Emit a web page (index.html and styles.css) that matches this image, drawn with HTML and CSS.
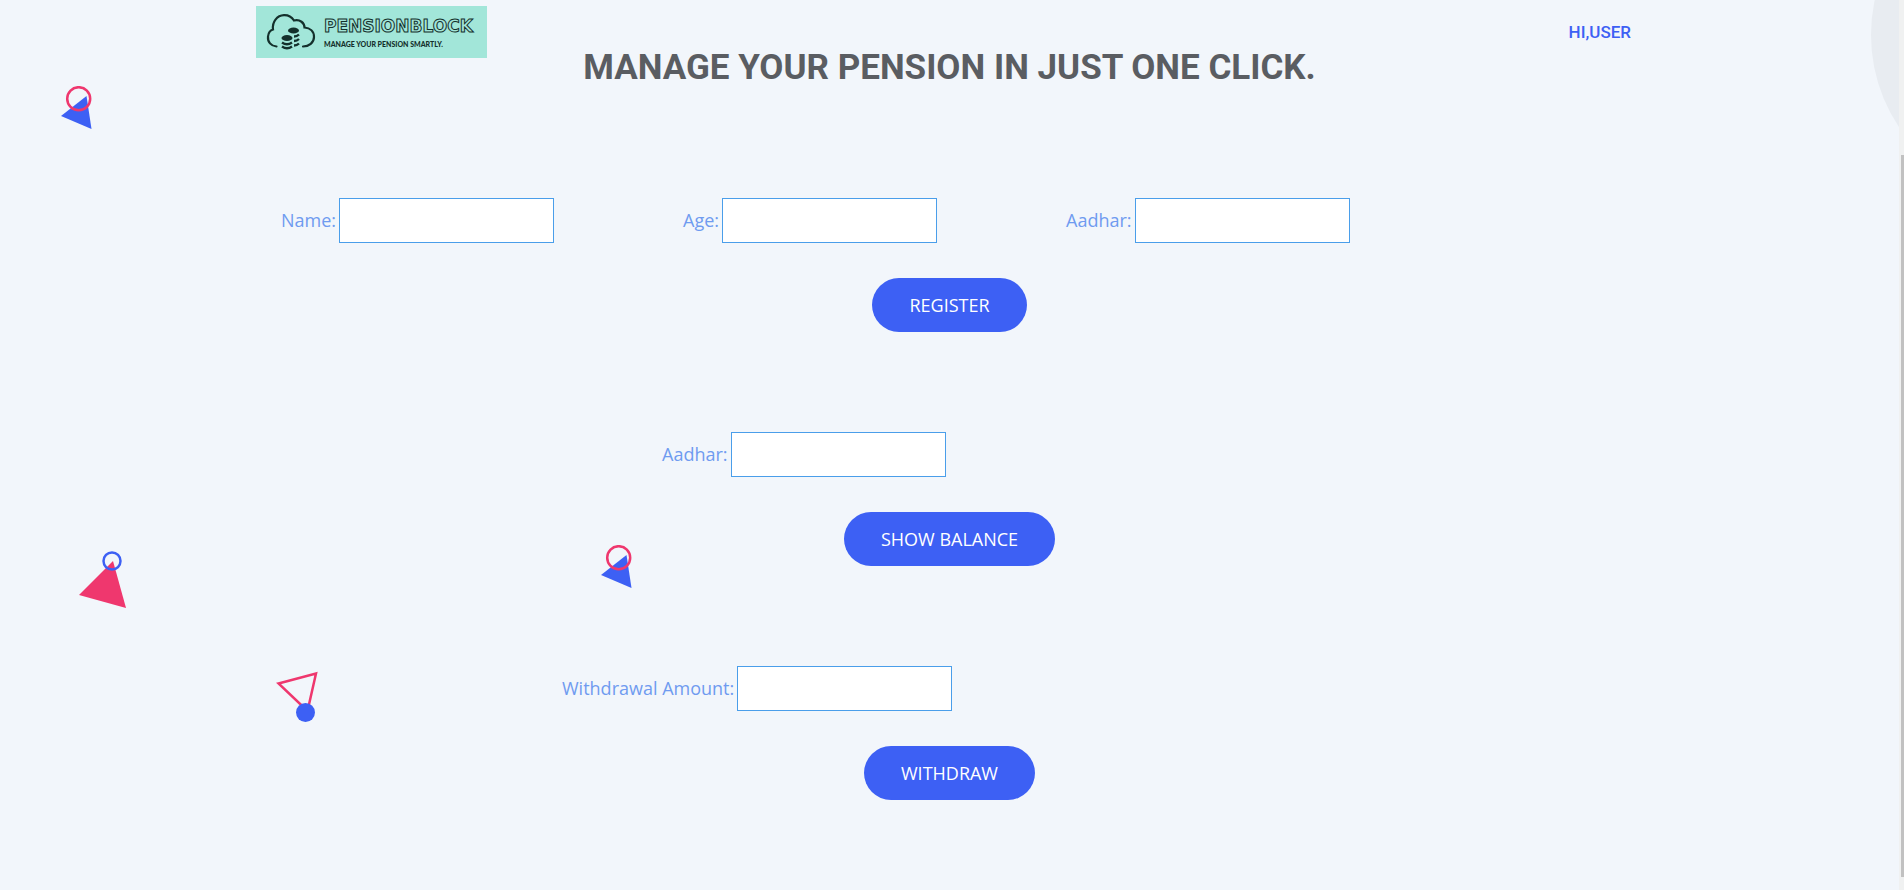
FILE: index.html
```html
<!DOCTYPE html>
<html lang="en">
<head>
<meta charset="utf-8">
<meta name="viewport" content="width=device-width, initial-scale=1">
<title>PensionBlock</title>
<link rel="stylesheet" href="styles.css">
</head>
<body>
<div class="page">
  <div class="decor" aria-hidden="true">
    <span class="disc"></span>
    <svg class="shape shape-top" width="34" height="44" viewBox="0 0 34 44">
      <path class="fill-blue" d="M1 30 26.500 10 31.500 43Z"/>
      <circle class="line-pink" cx="18.700" cy="12.700" r="11.500"/>
    </svg>
    <svg class="shape shape-left" width="50" height="60" viewBox="0 0 50 60">
      <path class="fill-pink" d="M1 45 35 11 48 58Z"/>
      <circle class="line-blue" cx="34" cy="11" r="8.500"/>
    </svg>
    <svg class="shape shape-bottom" width="44" height="52" viewBox="0 0 44 52">
      <path class="line-pink" d="M2.500 12.500 40 2.500 31.500 40Z"/>
      <circle class="fill-blue" cx="29.500" cy="41.500" r="9.500"/>
    </svg>
    <svg class="shape shape-center" width="34" height="44" viewBox="0 0 34 44">
      <path class="fill-blue" d="M1 30 26.500 10 31.500 43Z"/>
      <circle class="line-pink" cx="18.700" cy="12.700" r="11.500"/>
    </svg>
  </div>
  <div class="container">
    <header class="header">
      <a class="logo" href="#">
        <svg class="logo-icon" width="50" height="38" viewBox="0 0 50 38" aria-hidden="true">
          <path class="cloud" d="M10.500 33.500C5 33 1.500 29 2 23.500C2.500 19 5 17 7 16.500C6 9 11 2.500 18 2.200C23 2 26 4.500 28 7.500C34 6 38.500 10 38.500 14.500C44 15 48 18.500 48 24C48 29.500 43 33.500 37 33.500"/>
          <ellipse cx="27.500" cy="17.500" rx="5.500" ry="3"/>
          <ellipse cx="21" cy="25" rx="5.500" ry="3"/>
          <path class="coin" d="M16 29.500Q21 33 26 29.500M16 33.500Q21 37 26 33.500M28 23.500Q31 23.500 33 21.500M28 28Q31 28 33 26M28 32.500Q31 32.500 33 30.500"/>
        </svg>
        <span class="logo-text">
          <span class="logo-name">PENSIONBLOCK</span>
          <span class="logo-tagline">MANAGE YOUR PENSION SMARTLY.</span>
        </span>
      </a>
      <a class="user" href="#">HI,USER</a>
    </header>
    <main>
      <h1 class="title">MANAGE YOUR PENSION IN JUST ONE CLICK.</h1>
      <form class="form">
        <div class="fields fields-register">
          <div class="field"><label for="name">Name:</label><input id="name" type="text"></div>
          <div class="field"><label for="age">Age:</label><input id="age" type="text"></div>
          <div class="field"><label for="aadhar">Aadhar:</label><input id="aadhar" type="text"></div>
        </div>
        <button class="button" type="button">REGISTER</button>
      </form>
      <form class="form">
        <div class="fields fields-balance">
          <div class="field"><label for="balance-aadhar">Aadhar:</label><input id="balance-aadhar" type="text"></div>
        </div>
        <button class="button" type="button">SHOW BALANCE</button>
      </form>
      <form class="form">
        <div class="fields fields-withdraw">
          <div class="field"><label for="amount">Withdrawal Amount:</label><input id="amount" type="text"></div>
        </div>
        <button class="button" type="button">WITHDRAW</button>
      </form>
    </main>
  </div>
</div>
<div class="scrollbar" aria-hidden="true"><span class="thumb"></span></div>
</body>
</html>
```

FILE: styles.css
```css
* { box-sizing: border-box; }

body {
  display: flex;
  min-height: 100vh;
  margin: 0;
  background: #f2f6fb;
  font-family: "Open Sans", "Noto Sans", sans-serif;
  font-size: 18px;
  line-height: 28px;
}

.page {
  position: relative;
  flex: 1;
  overflow: hidden;
}

.container {
  position: relative;
  max-width: 1387px;
  margin: 0 auto;
}

/* Decorative shapes */
.disc {
  position: absolute;
  top: -130px;
  right: -302px;
  width: 330px;
  height: 330px;
  border-radius: 50%;
  background: #e8ecf1;
}
.shape { position: absolute; }
.shape-top { left: 60px; top: 86px; }
.shape-left { left: 78px; top: 550px; }
.shape-bottom { left: 276px; top: 671px; }
.shape-center { left: 600px; top: 545px; }
.fill-blue { fill: #3d60f4; }
.fill-pink { fill: #ef376e; }
.line-blue { fill: none; stroke: #3d60f4; stroke-width: 2.5; }
.line-pink { fill: none; stroke: #ef376e; stroke-width: 2.5; }

/* Header */
.header {
  display: flex;
  align-items: flex-start;
  justify-content: space-between;
  padding: 6px 12px 0 0;
}
.logo {
  display: flex;
  align-items: center;
  gap: 8px;
  width: 231px;
  height: 52px;
  padding-left: 10px;
  background: #a2e6d9;
  color: #14302c;
  text-decoration: none;
}
.logo-icon { flex: none; fill: #14302c; }
.cloud { fill: none; stroke: #14302c; stroke-width: 2.2; stroke-linecap: round; }
.coin { fill: none; stroke: #14302c; stroke-width: 2.4; }
.logo-text { display: flex; flex-direction: column; gap: 6px; padding-top: 2px; }
.logo-name {
  color: #a2e6d9;
  font: bold 17px/16px "DejaVu Sans", sans-serif;
  -webkit-text-stroke: 1px #14302c;
}
.logo-tagline { font: 900 7px/8px Lato, sans-serif; }
.user {
  padding-top: 12px;
  color: #3d60f4;
  font: 500 17px/28px Roboto, sans-serif;
  text-decoration: none;
}

.title {
  margin: -10px 0 0;
  color: #5a5d62;
  font: bold 35px/40px Roboto, sans-serif;
  text-align: center;
}

/* Forms */
.form {
  display: flex;
  flex-direction: column;
  align-items: center;
  gap: 35px;
  margin-top: 100px;
}
.title + .form { margin-top: 110px; }
.fields {
  display: flex;
  flex-wrap: wrap;
  gap: 20px 129px;
  align-self: flex-start;
}
.fields-register { margin-left: 25px; }
.fields-balance { margin-left: 406px; }
.fields-withdraw { margin-left: 306px; }
.field {
  display: flex;
  align-items: center;
  gap: 3px;
  color: #6f9bf0;
}
.field label { padding-bottom: 2px; }
.field input {
  width: 215px;
  height: 45px;
  padding: 0 10px;
  border: 1px solid #4a9eea;
  background: #fff;
  font: inherit;
}
.button {
  padding: 13px 37px;
  border: 0;
  border-radius: 27px;
  background: #3d60f4;
  color: #fff;
  font: inherit;
}

.scrollbar {
  display: flex;
  width: 5px;
  padding: 155px 0 13px 2px;
  background: #f0f1f1;
}
.thumb { flex: 1; background: #c1c1c1; }
```
